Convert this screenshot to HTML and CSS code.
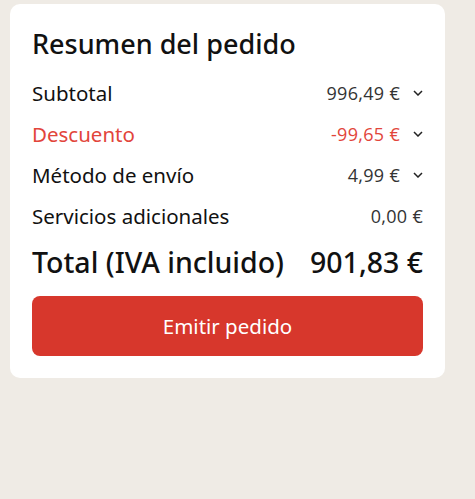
FILE: index.html
```html
<!DOCTYPE html>
<html lang="es">
<head>
  <meta charset="UTF-8">
  <meta name="viewport" content="width=device-width, initial-scale=1.0">
  <title>Resumen del pedido</title>
  <link rel="stylesheet" href="styles.css">
</head>
<body>
  <div class="summary">
    <h2>Resumen del pedido</h2>
    <div class="row">
      <span class="label">Subtotal</span>
      <span class="value">996,49 €<svg class="chev" viewBox="0 0 10 6"><path d="M1 1l4 4 4-4"/></svg></span>
    </div>
    <div class="row discount">
      <span class="label">Descuento</span>
      <span class="value">-99,65 €<svg class="chev" viewBox="0 0 10 6"><path d="M1 1l4 4 4-4"/></svg></span>
    </div>
    <div class="row">
      <span class="label">Método de envío</span>
      <span class="value">4,99 €<svg class="chev" viewBox="0 0 10 6"><path d="M1 1l4 4 4-4"/></svg></span>
    </div>
    <div class="row">
      <span class="label">Servicios adicionales</span>
      <span class="value">0,00 €</span>
    </div>
    <div class="total">
      <span>Total (IVA incluido)</span>
      <span>901,83 €</span>
    </div>
    <button class="submit">Emitir pedido</button>
  </div>
</body>
</html>
```

FILE: styles.css
```css
:root {
  --bg: #efebe5;
  --red: #d7372c;
  --red-text: #e2453b;
  --text: #111;
}
* { box-sizing: border-box; }
body {
  margin: 0;
  padding: 4px 0 0 10px;
  background: var(--bg);
  font-family: "Noto Sans", sans-serif;
  color: var(--text);
}
.summary {
  width: 435px;
  background: #fff;
  border-radius: 10px;
  padding: 22px;
}
h2 {
  margin: 0 0 10px;
  font-size: 27px;
  font-weight: 500;
  line-height: 36px;
}
.row {
  display: flex;
  justify-content: space-between;
  align-items: center;
  height: 41px;
  font-size: 20.5px;
}
.value {
  display: flex;
  align-items: center;
  font-family: "Open Sans", sans-serif;
  font-size: 18px;
  letter-spacing: 0.3px;
  color: #333;
}
.chev {
  width: 10px;
  height: 6px;
  margin-left: 13px;
  fill: none;
  stroke: #222;
  stroke-width: 1.5;
}
.discount .label, .discount .value { color: var(--red-text); }
.total {
  display: flex;
  justify-content: space-between;
  font-size: 28.5px;
  font-weight: 500;
  line-height: 40px;
  margin: 6px 0 14px;
}
.submit {
  width: 100%;
  height: 60px;
  border: none;
  border-radius: 8px;
  background: var(--red);
  color: #fff;
  font-family: "Noto Sans", sans-serif;
  font-size: 20.5px;
  cursor: pointer;
}
```
